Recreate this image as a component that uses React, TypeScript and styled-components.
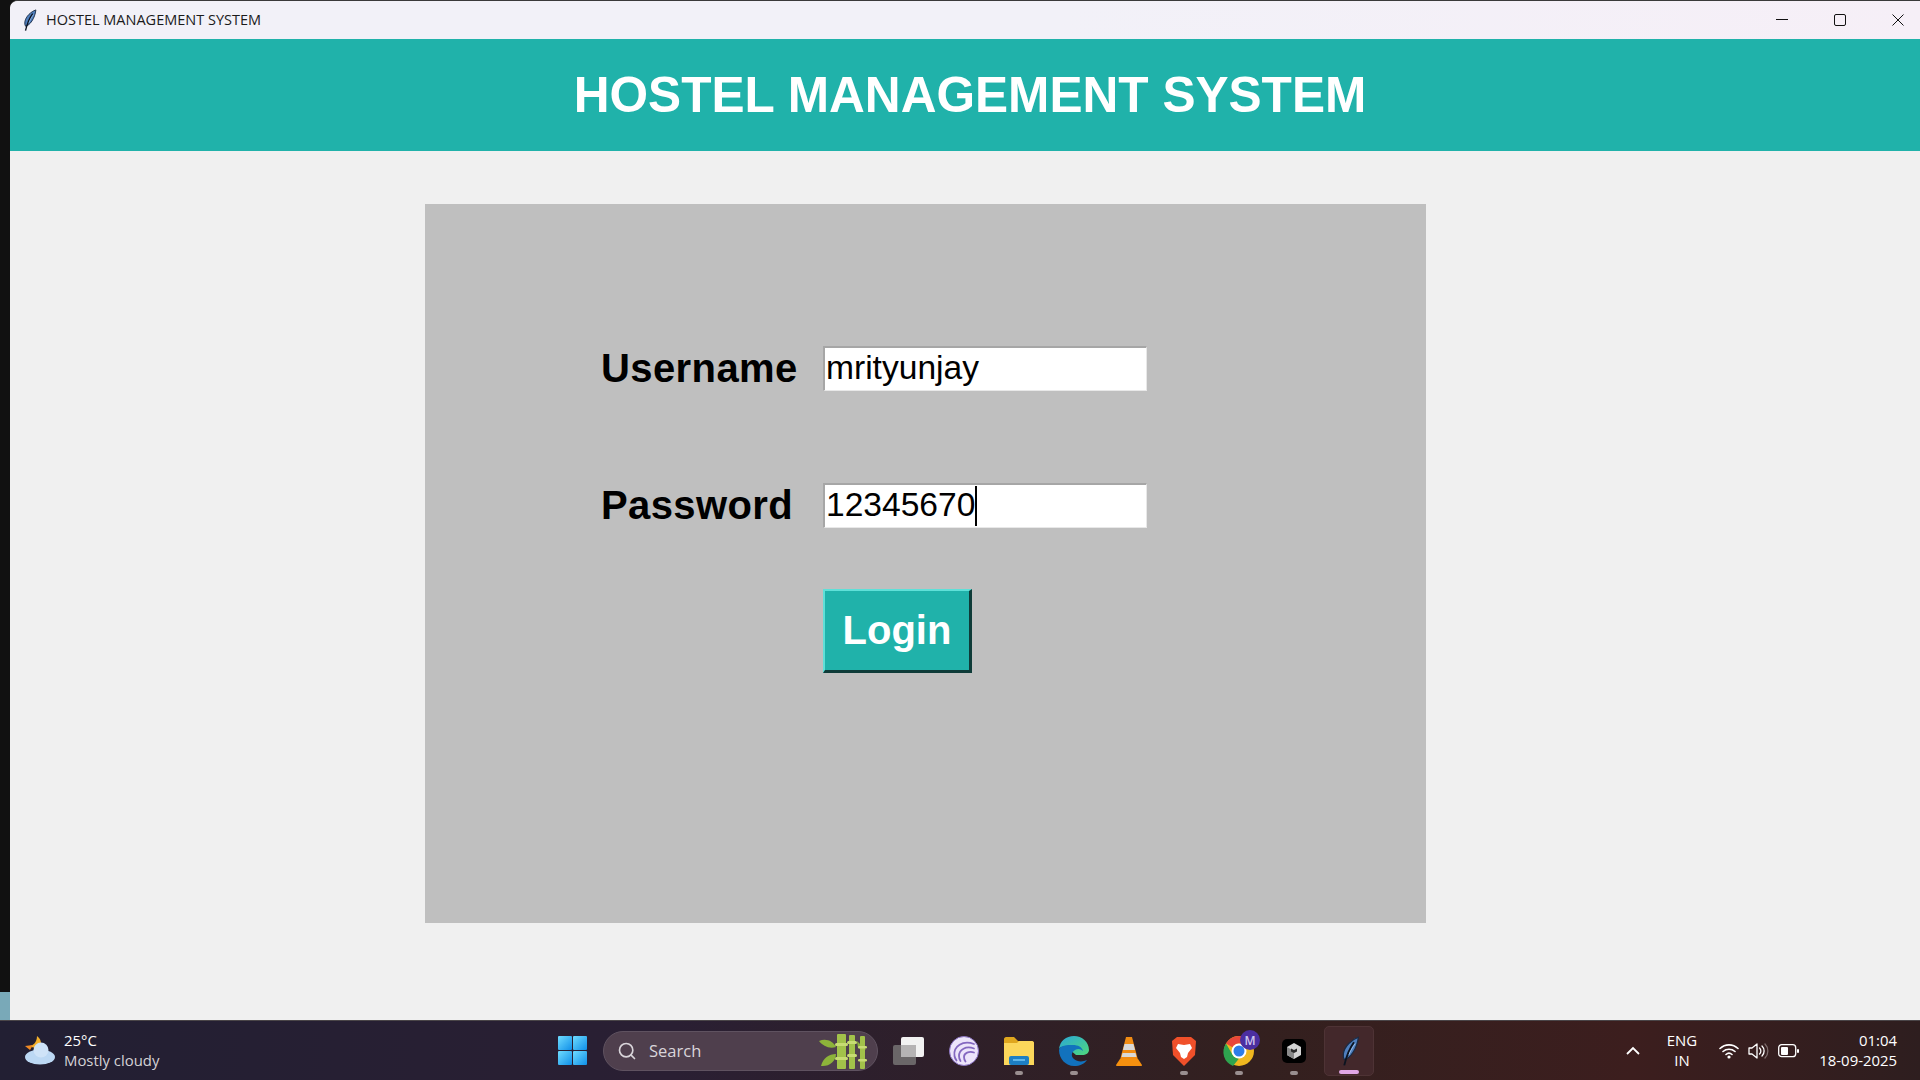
import React from 'react';
import styled, { createGlobalStyle } from 'styled-components';
import { Search } from 'lucide-react';

const GlobalStyle = createGlobalStyle`
  html, body, #root {
    margin: 0;
    height: 100%;
    background: #141414;
    overflow: hidden;
  }
  * { box-sizing: border-box; }
`;

const Screen = styled.div`
  display: flex;
  flex-direction: column;
  width: 1920px;
  height: 1080px;
`;
const Desktop = styled.div`
  display: flex;
  flex: 1;
  min-height: 0;
`;
const DesktopEdge = styled.div`
  width: 10px;
  display: flex;
  flex-direction: column;
  justify-content: flex-end;
  background: #111;
`;
const WallpaperPeek = styled.div`
  height: 28px;
  background: #79a9b8;
`;
const Window = styled.div`
  flex: 1;
  display: flex;
  flex-direction: column;
  background: #f0f0f0;
  border-top: 1px solid #3a3a3a;
  border-top-left-radius: 8px;
  overflow: hidden;
`;
const TitleBar = styled.div`
  height: 38px;
  display: flex;
  align-items: center;
  padding-left: 8px;
  background: linear-gradient(90deg, #f2f1f8 0%, #f2f1f8 55%, #f6eff7 100%);
`;
const TitleText = styled.span`
  margin: -2px 0 0 6px;
  font: 14.500px "Open Sans", "Noto Sans", sans-serif;
  color: #1b1b1b;
`;
const WindowControls = styled.div`
  margin-left: auto;
  display: flex;
  gap: 14px;
  height: 100%;
`;
const WindowControl = styled.div`
  width: 44px;
  display: flex;
  align-items: center;
  justify-content: center;
  color: #111;
`;
const Header = styled.header`
  height: 112px;
  display: flex;
  align-items: center;
  justify-content: center;
  padding-left: 10px;
  background: #20b2aa;
  font: bold 49.600px "Liberation Sans", Arial, sans-serif;
  color: #fff;
`;
const Content = styled.main`
  flex: 1;
  padding: 53px 0 0 415px;
`;
const LoginPanel = styled.section`
  width: 1001px;
  height: 719px;
  padding: 142px 0 0 176px;
  background: #bfbfbf;
`;
const FormRow = styled.div<{ $gap: number }>`
  display: flex;
  align-items: center;
  margin-bottom: ${p => p.$gap}px;
`;
const FieldLabel = styled.label`
  width: 222px;
  font: bold 40px "Liberation Sans", Arial, sans-serif;
  letter-spacing: 0.4px;
  color: #000;
`;
const Field = styled.div`
  width: 324px;
  height: 45px;
  display: flex;
  align-items: center;
  padding: 0 0 2px 1px;
  background: #fff;
  border-top: 2px solid #a6a6a6;
  border-left: 2px solid #a6a6a6;
  border-right: 1px solid #e8e8e8;
  border-bottom: 1px solid #e8e8e8;
  font: 33.600px "Liberation Sans", Arial, sans-serif;
  color: #000;
`;
const Caret = styled.span`
  width: 2px;
  height: 40px;
  margin-top: 2px;
  background: #000;
`;
const LoginButton = styled.button`
  width: 149px;
  height: 84px;
  margin-left: 222px;
  padding: 0;
  background: #20b2aa;
  border-style: solid;
  border-width: 2px 3px 3px 2px;
  border-color: #5fe0d8 #0e3b38 #0e3b38 #5fe0d8;
  font: bold 40px "Liberation Sans", Arial, sans-serif;
  color: #fff;
`;

const Taskbar = styled.footer`
  height: 60px;
  display: flex;
  align-items: center;
  background: linear-gradient(90deg, #221f33 0%, #2a1f33 35%, #33201f 65%, #3c1e1e 85%, #2e1e1f 100%);
  border-top: 1px solid #4a4548;
  color: #fff;
  font-family: "Open Sans", "Noto Sans", sans-serif;
`;
const Weather = styled.div`
  width: 556px;
  display: flex;
  align-items: center;
  gap: 8px;
  padding: 0 0 2px 24px;
`;
const WeatherText = styled.div`
  font-size: 14.900px;
  line-height: 20px;
  color: #d4d2d6;
  span { display: block; color: #fff; }
`;
const StartButton = styled.div`
  width: 47px;
  display: flex;
  padding-left: 2px;
`;
const SearchBox = styled.div`
  width: 275px;
  height: 40px;
  display: flex;
  align-items: center;
  gap: 12px;
  padding-left: 13px;
  background: #4f3f4d;
  border: 1px solid #5f5260;
  border-radius: 20px;
  color: #d9d5da;
  font-size: 16.500px;
  svg:last-child { margin-left: auto; margin-right: 8px; }
`;
const TrayApps = styled.div`
  display: flex;
  align-items: center;
  margin-left: 3px;
`;
const AppTile = styled.div<{ $active?: boolean; $open?: boolean }>`
  position: relative;
  width: 55px;
  height: 50px;
  display: flex;
  align-items: center;
  justify-content: center;
  border-radius: 5px;
  ${p => p.$active && 'background: #43282b; border: 1px solid #4e3335; width: 50px; margin-left: 3px;'}
  &::after {
    content: '';
    display: ${p => (p.$open || p.$active ? 'block' : 'none')};
    position: absolute;
    bottom: 1px;
    left: 50%;
    transform: translateX(-50%);
    width: ${p => (p.$active ? '20px' : '8px')};
    height: 4px;
    border-radius: 2px;
    background: ${p => (p.$active ? '#e0a6e6' : '#9a8f90')};
  }
`;
const SystemTray = styled.div`
  margin-left: auto;
  display: flex;
  align-items: center;
`;
const Language = styled.div`
  width: 62px;
  margin-left: 10px;
  text-align: center;
  font-size: 14.900px;
  line-height: 20px;
  padding-bottom: 2px;
`;
const StatusIcons = styled.div`
  display: flex;
  align-items: center;
  gap: 9px;
  margin-left: 6px;
`;
const Clock = styled.div`
  width: 110px;
  margin-left: 11px;
  padding: 0 23px 2px 0;
  text-align: right;
  font-size: 14.900px;
  line-height: 20px;
  white-space: nowrap;
`;

const Feather = ({ size = 18 }: { size?: number }) => (
  <svg width={size} height={size} viewBox="0 0 24 24">
    <path d="M19.500 1C14 3 8.500 8 7.500 14c-.3 2 0 3.500.7 4.800C13 18 18.500 10 19.500 1z" fill="#4f7fbe" stroke="#1a2b44" strokeWidth="1" />
    <path d="M16 5c-3 4-5.500 9-7.800 18.500" fill="none" stroke="#0c1420" strokeWidth="1.500" />
    <path d="M17 6c-2 3-4 6-5 9" fill="none" stroke="#9cc0ea" strokeWidth=".8" />
  </svg>
);

const WeatherIcon = () => (
  <svg width="32" height="30" viewBox="0 0 32 30">
    <path d="M13 1c4 3 5 7 3 13l-13-3c4 1 10-2 10-10z" fill="#f4b02c" />
    <path d="M1 11l8-1-3 5z" fill="#f08a24" />
    <ellipse cx="16" cy="22" rx="15" ry="7.500" fill="#bcd8f4" />
    <circle cx="17" cy="15" r="7.500" fill="#cfe3f8" />
  </svg>
);

const WindowsLogo = () => (
  <svg width="30" height="30" viewBox="0 0 30 30">
    <defs>
      <linearGradient id="win" x1="0" y1="0" x2="1" y2="1">
        <stop offset="0" stopColor="#6fdcff" />
        <stop offset="1" stopColor="#0f8fe8" />
      </linearGradient>
    </defs>
    <rect x="0" y="0" width="14" height="14" rx="1" fill="url(#win)" />
    <rect x="15" y="0" width="14" height="14" rx="1" fill="url(#win)" />
    <rect x="0" y="15" width="14" height="14" rx="1" fill="url(#win)" />
    <rect x="15" y="15" width="14" height="14" rx="1" fill="url(#win)" />
  </svg>
);

const Bamboo = () => (
  <svg width="50" height="36" viewBox="0 0 50 36">
    <path d="M0 8c7-3 14 0 17 6-7 2-13-1-17-6zM2 33c2-8 8-12 15-12 0 7-7 13-15 12z" fill="#8db33a" />
    <path d="M38 8l9 9-8-2z" fill="#8db33a" />
    <g fill="#a2c24a">
      <rect x="18" y="1" width="9" height="35" rx="1" />
      <rect x="30" y="2" width="6" height="34" rx="1" />
      <rect x="41" y="3" width="5" height="33" rx="1" />
    </g>
    <g fill="#c7dc73">
      <rect x="16" y="10" width="13" height="3" rx="1.500" />
      <rect x="16" y="24" width="13" height="3" rx="1.500" />
      <rect x="28" y="8" width="10" height="3" rx="1.500" />
      <rect x="28" y="21" width="10" height="3" rx="1.500" />
      <rect x="39" y="13" width="9" height="2.500" rx="1.200" />
      <rect x="39" y="26" width="9" height="2.500" rx="1.200" />
    </g>
  </svg>
);

const TaskView = () => (
  <svg width="32" height="28" viewBox="0 0 32 28">
    <rect x="0" y="8" width="23" height="20" rx="2" fill="#6a6668" />
    <rect x="8" y="0" width="23" height="20" rx="2" fill="#f2f2f2" />
    <rect x="8" y="8" width="15" height="12" fill="#b5b3b4" />
  </svg>
);

const Torrent = () => (
  <svg width="30" height="30" viewBox="0 0 30 30">
    <circle cx="15" cy="15" r="14.500" fill="#ece4fa" stroke="#8a72c4" />
    <g fill="none" stroke="#8468c0" strokeWidth="1.800" strokeLinecap="round">
      <path d="M25 8C14 4 4 10 5.500 20c.3 2 1 3 2 4.500" />
      <path d="M25 12.500c-8-3-15 1-15 7.500 0 2 .5 3.500 1.500 5" />
      <path d="M25 16.500c-5-1.500-10 .5-10 4.500 0 1.500.5 3 1.500 4.500" />
    </g>
  </svg>
);

const Folder = () => (
  <svg width="30" height="28" viewBox="0 0 30 28">
    <path d="M0 2c0-1 1-2 2-2h8l4 4h14c1 0 2 1 2 2v3H0z" fill="#dfa71e" />
    <path d="M0 6h13l2-2h13c1 0 2 1 2 2v22H0z" fill="#fbd75b" />
    <rect x="5" y="19" width="20" height="9" rx="2" fill="#1d7fc4" />
    <rect x="9" y="22" width="12" height="2" fill="#5fb6ea" />
  </svg>
);

const Edge = () => (
  <svg width="30" height="30" viewBox="0 0 30 30">
    <defs>
      <linearGradient id="edgeTop" x1="0" y1="0" x2="1" y2="1">
        <stop offset="0" stopColor="#2aa7d8" />
        <stop offset="1" stopColor="#4fd87c" />
      </linearGradient>
    </defs>
    <path d="M15 0c8 0 15 6 15 14 0 3-3 5-7 5l-6 0C7 10 3 9 0 13 1 5 7 0 15 0z" fill="url(#edgeTop)" />
    <path d="M0 14c0 9 7 16 15 16 6 0 10-2 13-6-4 2-10 2-13-1-3-2-3-7 1-9 3-2 6-1 8 1-1-4-5-6-10-6C8 9 1 9 0 14z" fill="#1272bd" />
  </svg>
);

const Vlc = () => (
  <svg width="26" height="30" viewBox="0 0 26 30">
    <path d="M10 1h6l6 23H4z" fill="#f28c13" />
    <path d="M8.500 8h9l1.500 6H7zM6.500 17h13l1 4H5.500z" fill="#d9d9d9" />
    <path d="M4 23h18l4 6c0 1-1 1-1 1H1s-1 0-1-1z" fill="#f5900f" />
  </svg>
);

const Brave = () => (
  <svg width="26" height="30" viewBox="0 0 26 30">
    <path d="M6 1h14l5 4-1 14-11 11L2 19 1 5z" fill="#f0502a" />
    <path d="M7 8l6 1 6-1 2 4-4 5-1 4-3 2-3-2-1-4-4-5z" fill="#fff" />
  </svg>
);

const Chrome = () => (
  <svg width="30" height="30" viewBox="0 0 30 30" overflow="visible">
    <circle cx="15" cy="15" r="15" fill="#efb71f" />
    <path d="M15 0a15 15 0 0 1 13 7.500H15A7.500 7.500 0 0 0 8.500 11.300L2 7.500A15 15 0 0 1 15 0z" fill="#e8473a" />
    <path d="M2 7.500l6.500 11.300A7.500 7.500 0 0 0 15 22.500L9 30A15 15 0 0 1 2 7.500z" fill="#2ea44f" />
    <circle cx="15" cy="15" r="7.500" fill="#fff" />
    <circle cx="15" cy="15" r="5.500" fill="#2d7de8" />
    <circle cx="26" cy="4" r="10" fill="#4b2fa0" />
    <text x="26" y="8.500" textAnchor="middle" fontSize="12" fontWeight="600" fill="#cfc6ee" fontFamily="Open Sans, sans-serif">M</text>
  </svg>
);

const BlackBox = () => (
  <svg width="24" height="24" viewBox="0 0 24 24">
    <rect width="24" height="24" rx="5" fill="#000" />
    <path d="M12 4l7 4v8l-7 4-7-4V8z" fill="#d4d4d4" />
    <path d="M12 12v8l-7-4V8z" fill="#8a8a8a" />
    <path d="M9 9.500l3 1.500 3-1.500v3l-3 1.500-3-1.500z" fill="#2a2a2a" />
  </svg>
);

const Wifi = () => (
  <svg width="20" height="16" viewBox="0 0 20 16" fill="none" stroke="#fff" strokeWidth="1.600" strokeLinecap="round">
    <path d="M1 5.500a13 13 0 0 1 18 0M4 8.500a9 9 0 0 1 12 0M7 11.500a4.500 4.500 0 0 1 6 0" />
    <circle cx="10" cy="14" r=".8" fill="#fff" />
  </svg>
);

const Volume = () => (
  <svg width="21" height="16" viewBox="0 0 21 16" fill="none" strokeWidth="1.300">
    <path d="M1 5h3l5-4v14l-5-4H1z" stroke="#fff" strokeLinejoin="round" />
    <path d="M11.500 5a4 4 0 0 1 0 6M14 3a7 7 0 0 1 0 10" stroke="#fff" strokeLinecap="round" />
    <path d="M17 1a10 10 0 0 1 0 14" stroke="#7d6c6c" strokeLinecap="round" />
  </svg>
);

const Battery = () => (
  <svg width="21" height="14" viewBox="0 0 21 14">
    <rect x=".7" y=".7" width="17" height="12" rx="3" fill="none" stroke="#fff" strokeWidth="1.300" />
    <rect x="3" y="3" width="7" height="8" rx="1" fill="#fff" />
    <rect x="19" y="5" width="2" height="4" rx="1" fill="#fff" />
  </svg>
);

const App: React.FC = () => (
  <>
    <GlobalStyle />
    <Screen>
      <Desktop>
        <DesktopEdge>
          <WallpaperPeek />
        </DesktopEdge>
        <Window>
          <TitleBar>
            <Feather size={22} />
            <TitleText>HOSTEL MANAGEMENT SYSTEM</TitleText>
            <WindowControls>
              <WindowControl>
                <svg width="12" height="2" viewBox="0 0 12 2"><rect width="12" height="1" fill="currentColor" /></svg>
              </WindowControl>
              <WindowControl>
                <svg width="12" height="12" viewBox="0 0 12 12"><rect x=".5" y=".5" width="11" height="11" rx="1.500" fill="none" stroke="currentColor" /></svg>
              </WindowControl>
              <WindowControl>
                <svg width="12" height="12" viewBox="0 0 12 12"><path d="M.5.500l11 11M11.500.500l-11 11" stroke="currentColor" /></svg>
              </WindowControl>
            </WindowControls>
          </TitleBar>
          <Header>HOSTEL MANAGEMENT SYSTEM</Header>
          <Content>
            <LoginPanel>
              <FormRow $gap={92}>
                <FieldLabel>Username</FieldLabel>
                <Field>mrityunjay</Field>
              </FormRow>
              <FormRow $gap={61}>
                <FieldLabel>Password</FieldLabel>
                <Field>12345670<Caret /></Field>
              </FormRow>
              <LoginButton>Login</LoginButton>
            </LoginPanel>
          </Content>
        </Window>
      </Desktop>
      <Taskbar>
        <Weather>
          <WeatherIcon />
          <WeatherText><span>25°C</span>Mostly cloudy</WeatherText>
        </Weather>
        <StartButton><WindowsLogo /></StartButton>
        <SearchBox>
          <Search size={20} strokeWidth={2} />
          Search
          <Bamboo />
        </SearchBox>
        <TrayApps>
          <AppTile><TaskView /></AppTile>
          <AppTile><Torrent /></AppTile>
          <AppTile $open><Folder /></AppTile>
          <AppTile $open><Edge /></AppTile>
          <AppTile><Vlc /></AppTile>
          <AppTile $open><Brave /></AppTile>
          <AppTile $open><Chrome /></AppTile>
          <AppTile $open><BlackBox /></AppTile>
          <AppTile $active><Feather size={30} /></AppTile>
        </TrayApps>
        <SystemTray>
          <svg width="16" height="10" viewBox="0 0 16 10" fill="none" stroke="#fff" strokeWidth="1.800"><path d="M2 8l6-6 6 6" /></svg>
          <Language>ENG<br />IN</Language>
          <StatusIcons>
            <Wifi />
            <Volume />
            <Battery />
          </StatusIcons>
          <Clock>01:04<br />18-09-2025</Clock>
        </SystemTray>
      </Taskbar>
    </Screen>
  </>
);

export default App;
